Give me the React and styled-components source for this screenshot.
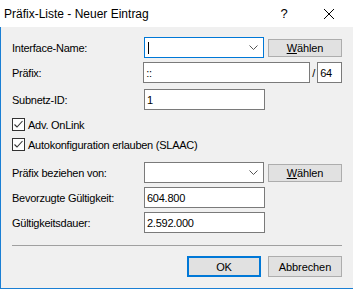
import React from 'react';
import styled, { createGlobalStyle } from 'styled-components';

const Global = createGlobalStyle`
  html, body { margin: 0; padding: 0; background: #f0f0f0; }
  * { box-sizing: border-box; }
`;

const Window = styled.div`
  width: 353px;
  height: 289px;
  display: flex;
  flex-direction: column;
  font-family: "Liberation Sans", Arial, sans-serif;
  font-size: 11px;
  letter-spacing: -0.25px;
  color: #000;
`;

const TitleBar = styled.div`
  height: 27px;
  background: #fff;
  display: flex;
  align-items: center;
  padding-left: 4px;
  font-size: 12px;
  letter-spacing: 0;
`;

const Title = styled.div`
  flex: 1;
`;

const Help = styled.div`
  width: 10px;
  margin-right: 34px;
  font-size: 13px;
  text-align: center;
`;

const Close = styled.div`
  width: 12px;
  height: 12px;
  margin-right: 18px;
  display: flex;
`;

const Body = styled.div`
  flex: 1;
  background: #f0f0f0;
  border-left: 1px solid #1a7fd4;
  border-bottom: 1px solid #1a7fd4;
  padding: 0 11px 0 11px;
  display: flex;
  flex-direction: column;
`;

const Row = styled.div`
  display: flex;
  align-items: center;
  height: ${p => p.h || 21}px;
  margin-top: ${p => p.top}px;
`;

const Label = styled.div`
  width: 132px;
  white-space: nowrap;
`;

const Field = styled.div`
  width: ${p => p.w}px;
  height: 21px;
  background: #fff;
  border: 1px solid ${p => (p.focus ? '#0078d7' : '#7a7a7a')};
  display: flex;
  align-items: center;
  padding-left: 2px;
  white-space: nowrap;
`;

const Caret = styled.div`
  width: 1px;
  height: 12px;
  background: #000;
  margin-left: 1px;
`;

const Chevron = styled.svg`
  margin-left: auto;
  margin-right: 5px;
`;

const SmallButton = styled.div`
  width: 74px;
  height: ${p => p.h || 18}px;
  margin-left: ${p => p.ml || 0}px;
  background: #e1e1e1;
  border: ${p => (p.primary ? '2px solid #0078d7' : '1px solid #adadad')};
  display: flex;
  align-items: center;
  justify-content: center;
  letter-spacing: -0.1px;
`;

const Slash = styled.div`
  width: 7px;
  text-align: center;
`;

const CheckRow = styled.div`
  display: flex;
  align-items: center;
  height: 13px;
  margin-top: ${p => p.top}px;
  gap: 3px;
`;

const Separator = styled.div`
  height: 1px;
  background: #a0a0a0;
  margin-top: 12px;
`;

const Footer = styled.div`
  display: flex;
  justify-content: flex-end;
  gap: 7px;
  margin-top: 10px;
`;

function Combo({ focus }) {
  return (
    <Field w={120} focus={focus}>
      {focus && <Caret />}
      <Chevron width="9" height="5" viewBox="0 0 9 5">
        <polyline points="0.5,0.5 4.5,4.5 8.5,0.5" fill="none" stroke="#555" strokeWidth="1" />
      </Chevron>
    </Field>
  );
}

function Check({ top, children }) {
  return (
    <CheckRow top={top}>
      <svg width="13" height="13" viewBox="0 0 13 13">
        <rect x="0.5" y="0.5" width="12" height="12" fill="#fff" stroke="#333" />
        <polyline points="2.5,6.5 5,9 10.5,3" fill="none" stroke="#333" strokeWidth="1.1" />
      </svg>
      <span>{children}</span>
    </CheckRow>
  );
}

export default function App() {
  return (
    <Window>
      <Global />
      <TitleBar>
        <Title>Präfix-Liste - Neuer Eintrag</Title>
        <Help>?</Help>
        <Close>
          <svg width="12" height="12" viewBox="0 0 12 12">
            <path d="M1 1 L11 11 M11 1 L1 11" stroke="#000" strokeWidth="1" />
          </svg>
        </Close>
      </TitleBar>
      <Body>
        <Row top={10}>
          <Label>Interface-Name:</Label>
          <Combo focus />
          <SmallButton ml={4}><span><u>W</u>ählen</span></SmallButton>
        </Row>
        <Row top={4}>
          <Label>Präfix:</Label>
          <Field w={168}>::</Field>
          <Slash>/</Slash>
          <Field w={25}>64</Field>
        </Row>
        <Row top={6}>
          <Label>Subnetz-ID:</Label>
          <Field w={121}>1</Field>
        </Row>
        <Check top={8}>Adv. OnLink</Check>
        <Check top={7}>Autokonfiguration erlauben (SLAAC)</Check>
        <Row top={11}>
          <Label>Präfix beziehen von:</Label>
          <Combo />
          <SmallButton ml={4}><span><u>W</u>ählen</span></SmallButton>
        </Row>
        <Row top={4}>
          <Label>Bevorzugte Gültigkeit:</Label>
          <Field w={121}>604.800</Field>
        </Row>
        <Row top={4}>
          <Label>Gültigkeitsdauer:</Label>
          <Field w={121}>2.592.000</Field>
        </Row>
        <Separator />
        <Footer>
          <SmallButton h={21} primary>OK</SmallButton>
          <SmallButton h={21}>Abbrechen</SmallButton>
        </Footer>
      </Body>
    </Window>
  );
}
